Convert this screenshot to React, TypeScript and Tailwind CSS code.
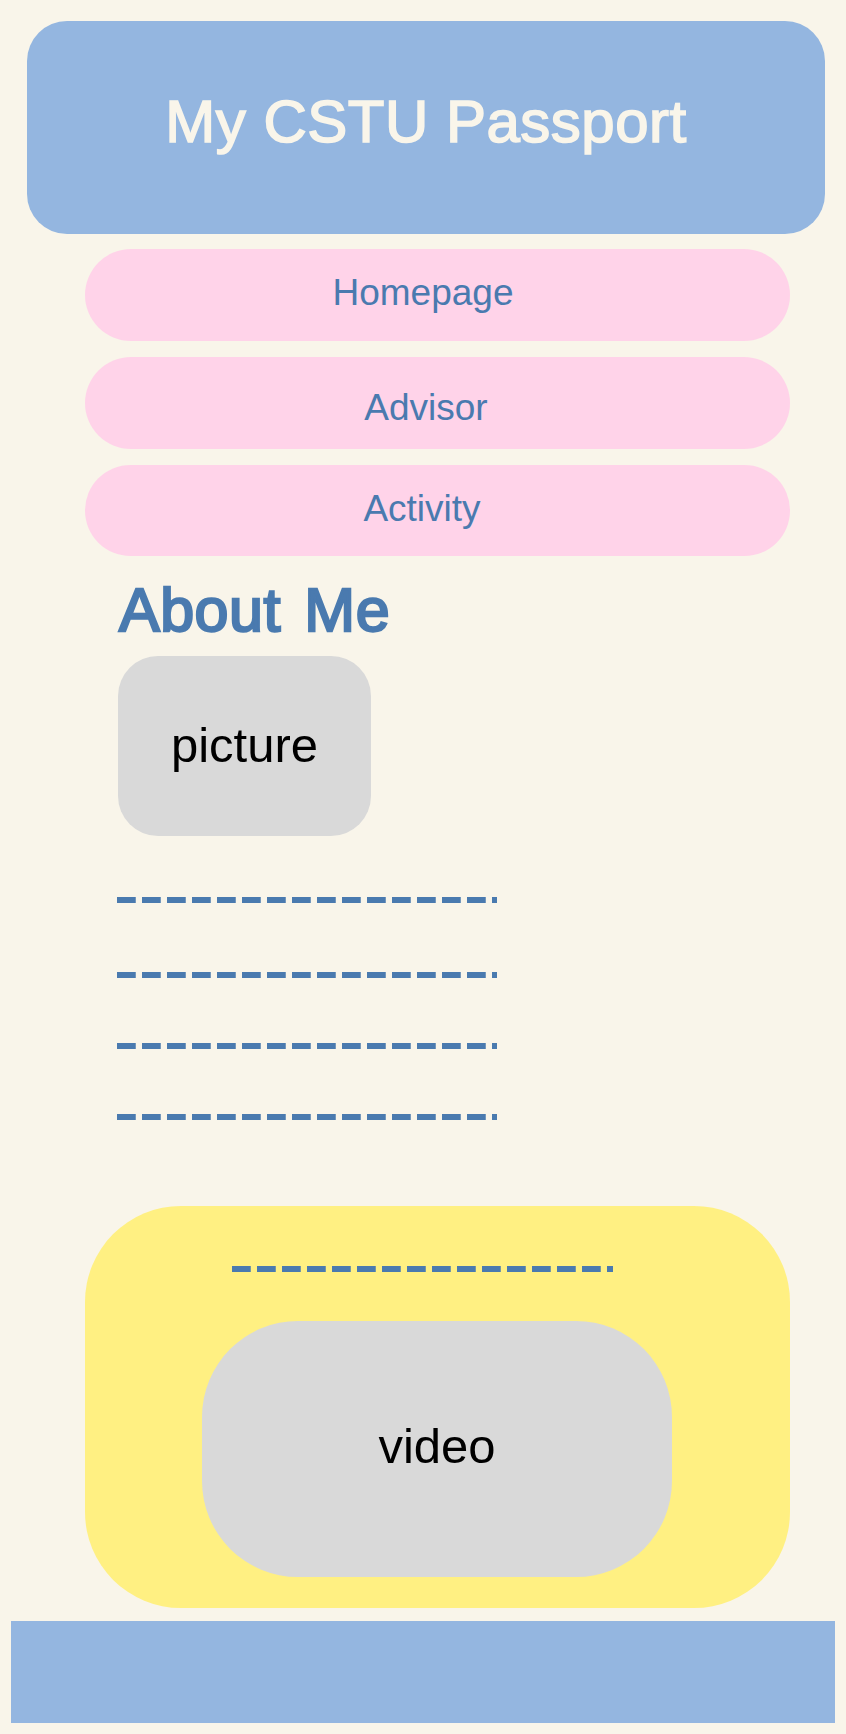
import React from "react";

function DashLine({ width }: { width: number }) {
  return (
    <svg width={width} height={6} className="block">
      <line
        x1={0}
        y1={3}
        x2={width}
        y2={3}
        stroke="#4a7aaf"
        strokeWidth={6}
        strokeDasharray="18.75 6.25"
      />
    </svg>
  );
}

export default function App() {
  return (
    <div className="min-h-[1734px] w-[846px] bg-[#f9f5ea] pt-[21px] pb-[11px] font-['Liberation_Sans',Arial,sans-serif]">
      <header className="ml-[27px] h-[213px] w-[798px] rounded-[40px] bg-[#94b6e0] pt-[71px] text-center text-[60px] leading-none tracking-[0.5px] text-[#f9f5ea] [-webkit-text-stroke:1.6px_#f9f5ea]">
        My CSTU Passport
      </header>

      <nav className="ml-[85px] mt-[15px] flex w-[705px] flex-col gap-[16px]">
        <a className="flex h-[92px] items-center justify-center rounded-full bg-[#ffd3e9] pr-[29px] pb-[4px] text-[37px] text-[#4a7aaf]">
          Homepage
        </a>
        <a className="flex h-[92px] items-center justify-center rounded-full bg-[#ffd3e9] pr-[23px] pt-[10px] text-[37px] text-[#4a7aaf]">
          Advisor
        </a>
        <a className="flex h-[91px] items-center justify-center rounded-full bg-[#ffd3e9] pr-[31px] pb-[4px] text-[37px] text-[#4a7aaf]">
          Activity
        </a>
      </nav>

      <h2 className="ml-[119px] mt-[24px] text-[61px] leading-none tracking-[0.5px] [word-spacing:6px] text-[#4a7aaf] [-webkit-text-stroke:2.4px_#4a7aaf]">
        About Me
      </h2>

      <div className="ml-[118px] mt-[15px] flex h-[180px] w-[253px] items-center justify-center rounded-[40px] bg-[#d9d9d9] text-[49px] text-black">
        picture
      </div>

      <div className="ml-[117px] flex flex-col">
        <div className="mt-[61px]">
          <DashLine width={380} />
        </div>
        <div className="mt-[69px]">
          <DashLine width={380} />
        </div>
        <div className="mt-[65px]">
          <DashLine width={380} />
        </div>
        <div className="mt-[65px]">
          <DashLine width={380} />
        </div>
      </div>

      <section className="ml-[85px] mt-[86px] flex h-[402px] w-[705px] flex-col rounded-[96px] bg-[#fff082] pt-[60px]">
        <div className="ml-[147px]">
          <DashLine width={381} />
        </div>
        <div className="ml-[117px] mt-[49px] flex h-[256px] w-[470px] items-center justify-center rounded-[96px] bg-[#d9d9d9] pb-[4px] text-[49px] text-black">
          video
        </div>
      </section>

      <footer className="ml-[11px] mt-[13px] h-[102px] w-[824px] bg-[#94b6e0]" />
    </div>
  );
}
